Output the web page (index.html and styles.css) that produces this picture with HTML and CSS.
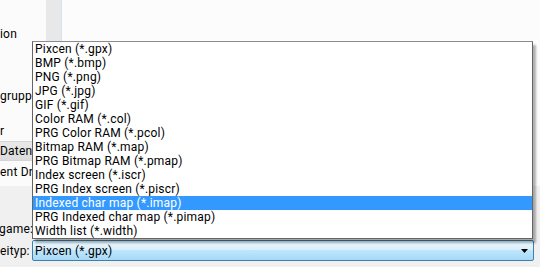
FILE: index.html
```html
<!DOCTYPE html>
<html>
<head>
<meta charset="utf-8">
<link rel="stylesheet" href="styles.css">
</head>
<body>
<div class="window">
  <div class="browser">
    <div class="nav">
      <div class="nav-item lbl-ion">ion</div>
      <div class="nav-item lbl-grupp">grupp</div>
      <div class="nav-item lbl-r">r</div>
      <div class="nav-item nav-selected"><span class="clip">Datent</span></div>
      <div class="nav-item lbl-drive"><span class="clip">ent Driv</span></div>
    </div>
    <div class="scroll"></div>
    <div class="files"></div>
  </div>
  <div class="form">
    <div class="form-row name-row">
      <div class="form-label">game:</div>
    </div>
    <div class="form-row type-row">
      <div class="form-label">eityp:</div>
      <div class="combo">
        <span class="combo-text">Pixcen (*.gpx)</span>
        <svg class="combo-arrow" width="7" height="4" viewBox="0 0 7 4"><path d="M0 0H7L3.5 4Z" fill="#000"/></svg>
      </div>
    </div>
  </div>
  <ul class="popup">
    <li>Pixcen (*.gpx)</li>
    <li>BMP (*.bmp)</li>
    <li>PNG (*.png)</li>
    <li>JPG (*.jpg)</li>
    <li>GIF (*.gif)</li>
    <li>Color RAM (*.col)</li>
    <li>PRG Color RAM (*.pcol)</li>
    <li>Bitmap RAM (*.map)</li>
    <li>PRG Bitmap RAM (*.pmap)</li>
    <li>Index screen (*.iscr)</li>
    <li>PRG Index screen (*.piscr)</li>
    <li class="selected">Indexed char map (*.imap)</li>
    <li>PRG Indexed char map (*.pimap)</li>
    <li>Width list (*.width)</li>
  </ul>
</div>
</body>
</html>
```

FILE: styles.css
```css
html, body {
  margin: 0;
  padding: 0;
}
body {
  width: 540px;
  height: 267px;
  overflow: hidden;
  background: #f0f0f0;
  font-family: Roboto, "Noto Sans", sans-serif;
  font-size: 12px;
  letter-spacing: 0.2px;
  color: #000;
}
.window {
  position: relative;
  width: 540px;
  height: 267px;
  overflow: hidden;
}
.browser {
  display: grid;
  grid-template-columns: 46px 16px 1fr;
  height: 186px;
}
.nav {
  background: #fbfbfb;
  padding-top: 27px;
  overflow: hidden;
  white-space: nowrap;
}
.nav-item {
  height: 14px;
  line-height: 14px;
}
.clip {
  display: block;
  width: 32px;
  overflow: hidden;
}
.lbl-grupp { margin-top: 48px; }
.lbl-r { margin-top: 21px; }
.nav-selected {
  margin-top: 3px;
  height: 18px;
  line-height: 18px;
  background: linear-gradient(#e9e9e9, #dcdcdc);
  border-top: 1px solid #d4d4d4;
  border-bottom: 1px solid #d4d4d4;
}
.lbl-drive { margin-top: 4px; }
.scroll {
  background: #e8e8e8;
  border-right: 1px solid #d6e3f1;
}
.files {
  background: #fcfcfc;
}
.form {
  display: flex;
  flex-direction: column;
  padding-top: 36px;
}
.form-row {
  display: flex;
  align-items: center;
}
.name-row {
  height: 14px;
  line-height: 14px;
}
.type-row {
  margin-top: 4px;
  height: 21px;
}
.form-label {
  width: 32px;
  flex: none;
  white-space: nowrap;
  overflow: hidden;
}
.name-row .form-label {
  margin-left: -1px;
  width: 33px;
}
.combo {
  height: 19px;
  width: 493px;
  border: 1px solid #3c7fb1;
  border-radius: 2px;
  background: linear-gradient(#eaf6fd 0%, #d9f0fc 45%, #bee6fd 50%, #a7d9f5 100%);
  display: flex;
  align-items: center;
  justify-content: space-between;
  padding: 0 5px 0 2px;
}
.combo-text {
  line-height: 14px;
}
.combo-arrow {
  display: block;
  margin-top: 1px;
}
.popup {
  position: absolute;
  left: 32px;
  top: 41px;
  width: 499px;
  margin: 0;
  padding: 0;
  list-style: none;
  background: #fff;
  border: 1px solid #646464;
  border-top-color: #8c8c8c;
  box-shadow: 3px 4px 2px rgba(0, 0, 0, 0.3);
}
.popup li {
  height: 14px;
  line-height: 14px;
  padding-left: 2px;
  white-space: nowrap;
}
.popup li.selected {
  background: #3399ff;
  color: #fff;
}
```
